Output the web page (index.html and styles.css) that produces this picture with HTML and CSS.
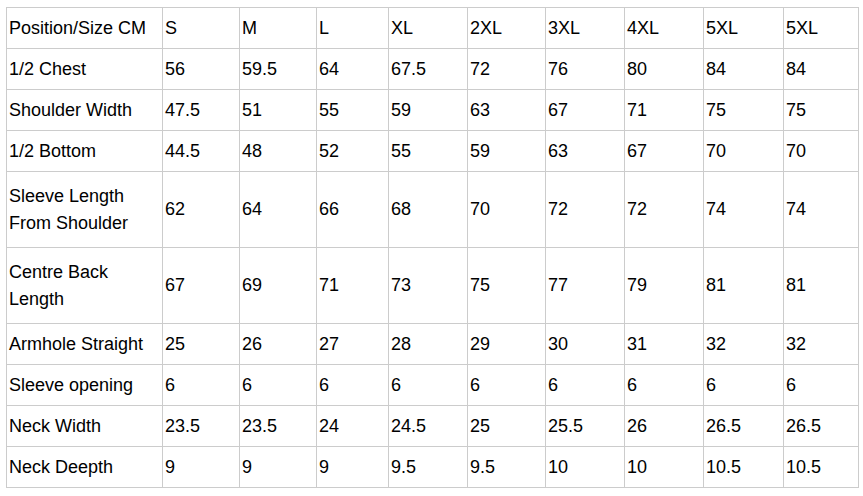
FILE: index.html
```html
<!DOCTYPE html>
<html>
<head>
<meta charset="utf-8">
<link rel="stylesheet" href="styles.css">
</head>
<body>
<table class="size-table">
  <colgroup>
    <col class="c0"><col class="c1"><col class="c2"><col class="c3"><col class="c4"><col class="c5"><col class="c6"><col class="c7"><col class="c8"><col class="c9">
  </colgroup>
  <tr class="r1"><td>Position/Size CM</td><td>S</td><td>M</td><td>L</td><td>XL</td><td>2XL</td><td>3XL</td><td>4XL</td><td>5XL</td><td>5XL</td></tr>
  <tr class="r1"><td>1/2 Chest</td><td>56</td><td>59.5</td><td>64</td><td>67.5</td><td>72</td><td>76</td><td>80</td><td>84</td><td>84</td></tr>
  <tr class="r1"><td>Shoulder Width</td><td>47.5</td><td>51</td><td>55</td><td>59</td><td>63</td><td>67</td><td>71</td><td>75</td><td>75</td></tr>
  <tr class="r1"><td>1/2 Bottom</td><td>44.5</td><td>48</td><td>52</td><td>55</td><td>59</td><td>63</td><td>67</td><td>70</td><td>70</td></tr>
  <tr class="r2"><td>Sleeve Length<br>From Shoulder</td><td>62</td><td>64</td><td>66</td><td>68</td><td>70</td><td>72</td><td>72</td><td>74</td><td>74</td></tr>
  <tr class="r2"><td>Centre Back<br>Length</td><td>67</td><td>69</td><td>71</td><td>73</td><td>75</td><td>77</td><td>79</td><td>81</td><td>81</td></tr>
  <tr class="r1"><td>Armhole Straight</td><td>25</td><td>26</td><td>27</td><td>28</td><td>29</td><td>30</td><td>31</td><td>32</td><td>32</td></tr>
  <tr class="r1"><td>Sleeve opening</td><td>6</td><td>6</td><td>6</td><td>6</td><td>6</td><td>6</td><td>6</td><td>6</td><td>6</td></tr>
  <tr class="r1"><td>Neck Width</td><td>23.5</td><td>23.5</td><td>24</td><td>24.5</td><td>25</td><td>25.5</td><td>26</td><td>26.5</td><td>26.5</td></tr>
  <tr class="r1"><td>Neck Deepth</td><td>9</td><td>9</td><td>9</td><td>9.5</td><td>9.5</td><td>10</td><td>10</td><td>10.5</td><td>10.5</td></tr>
</table>
</body>
</html>
```
FILE: styles.css
```css
html, body {
  margin: 0;
  padding: 0;
  background: #ffffff;
}
body {
  font-family: "Liberation Sans", Arial, sans-serif;
  font-size: 18px;
  color: #000000;
}
.size-table {
  margin: 7px 0 0 6px;
  border-collapse: collapse;
  table-layout: fixed;
  width: 853px;
}
.size-table td {
  border: 1px solid #cccccc;
  padding: 0 2px;
  line-height: 27px;
  vertical-align: middle;
  text-align: left;
  white-space: nowrap;
}
.c0 { width: 156px; }
.c1 { width: 77px; }
.c2 { width: 77px; }
.c3 { width: 72px; }
.c4 { width: 79px; }
.c5 { width: 78px; }
.c6 { width: 79px; }
.c7 { width: 79px; }
.c8 { width: 80px; }
.c9 { width: 75px; }
.r1 { height: 41px; }
.r2 { height: 76px; }
```
